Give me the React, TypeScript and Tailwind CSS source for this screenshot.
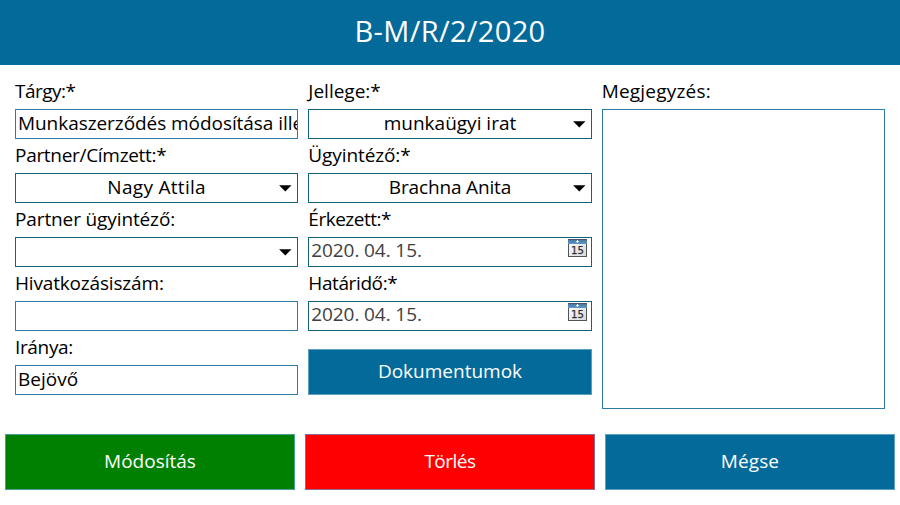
import type { ReactNode } from 'react';

const labelBase = 'flex h-[34px] items-center whitespace-nowrap text-[19px] leading-[26px] pb-[2px] text-black';

function Label({ children, className = '' }: { children: ReactNode; className?: string }) {
  return <div className={`${labelBase} ${className}`}><span>{children}</span></div>;
}

function TextBox({ value, className = '' }: { value?: string; className?: string }) {
  return (
    <div className="flex h-[30px] items-center overflow-hidden whitespace-nowrap border border-[#2f7ba3] bg-white pb-[3px] pl-[2px] text-[19px] leading-[26px] text-black">
      <span className={className}>{value}</span>
    </div>
  );
}

function Select({ value, className = '' }: { value?: string; className?: string }) {
  return (
    <div className="flex h-[30px] items-center whitespace-nowrap border border-[#17617f] bg-white pr-[5px] text-[19px] leading-[26px] text-black">
      <span className="flex-1 pb-[3px] pl-[18px] text-center"><span className={className}>{value}</span></span>
      <svg width="13" height="7" viewBox="0 0 13 7" className="mt-px" aria-hidden="true">
        <path d="M0.1 0.2H12.5L6.3 6.5Z" fill="#000" />
      </svg>
    </div>
  );
}

function CalendarIcon() {
  return (
    <svg width="20" height="19" viewBox="0 0 20 19" className="mt-px" aria-hidden="true">
      <defs>
        <linearGradient id="calendarPage" x1="0" y1="0" x2="1" y2="1">
          <stop offset="0" stopColor="#fff" />
          <stop offset="1" stopColor="#d5d8dd" />
        </linearGradient>
        <linearGradient id="calendarTop" x1="0" y1="0" x2="0" y2="1">
          <stop offset="0" stopColor="#426f99" />
          <stop offset="1" stopColor="#6498c3" />
        </linearGradient>
      </defs>
      <rect x="0.5" y="0.5" width="18" height="17" fill="url(#calendarPage)" stroke="#50545b" />
      <rect x="0" y="0" width="19" height="5" fill="url(#calendarTop)" />
      <path d="M0 0.5H19" stroke="#46596c" />
      <path d="M8 2.5H11M9.5 1V4" stroke="#fff" strokeOpacity="0.85" />
      <text x="9.6" y="15" textAnchor="middle" fontSize="10" fontFamily="DejaVu Sans" textLength="13" lengthAdjust="spacingAndGlyphs" fill="#303030" stroke="#303030" strokeWidth="0.25">15</text>
    </svg>
  );
}

function DateBox({ value }: { value: string }) {
  return (
    <div className="flex h-[30px] items-start justify-between whitespace-nowrap border border-[#17617f] bg-white pl-[2px] pr-[3px] text-[19px] leading-[26px] text-[#404040]">
      <span className="-mt-px tracking-[-0.1px]">{value}</span>
      <CalendarIcon />
    </div>
  );
}

export default function App() {
  return (
    <div className="flex h-[505px] w-[900px] flex-col overflow-hidden bg-white font-['Open_Sans','Noto_Sans',sans-serif]">
      <header className="flex h-[65px] items-center justify-center bg-[#046a9a] pb-[3px] text-[29px] leading-[38px] text-white">
        <h1 className="tracking-[0.35px]">B-M/R/2/2020</h1>
      </header>
      <main className="grid h-[359px] grid-cols-3 gap-[10px] px-[15px] pt-[10px]">
        <section>
          <Label className="tracking-[-0.5px]">Tárgy:*</Label>
          <TextBox value="Munkaszerződés módosítása illetve" className="tracking-[-0.06px]" />
          <Label className="tracking-[-0.3px]">Partner/Címzett:*</Label>
          <Select value="Nagy Attila" className="tracking-[0.3px]" />
          <Label className="tracking-[-0.12px]">Partner ügyintéző:</Label>
          <Select />
          <Label className="tracking-[-0.17px]">Hivatkozásiszám:</Label>
          <TextBox />
          <Label className="tracking-[-0.35px]">Iránya:</Label>
          <TextBox value="Bejövő" />
        </section>
        <section>
          <Label>Jellege:*</Label>
          <Select value="munkaügyi irat" />
          <Label className="tracking-[-0.1px]">Ügyintéző:*</Label>
          <Select value="Brachna Anita" className="tracking-[-0.15px]" />
          <Label className="tracking-[-0.5px]">Érkezett:*</Label>
          <DateBox value="2020. 04. 15." />
          <Label className="tracking-[-0.4px]">Határidő:*</Label>
          <DateBox value="2020. 04. 15." />
          <button className="mt-[18px] flex h-[46px] w-full items-center justify-center border border-[#5c9fc0] bg-[#046a9a] pb-[2px] text-[19px] leading-[26px] text-white">
            <span>Dokumentumok</span>
          </button>
        </section>
        <section>
          <Label className="tracking-[0.2px]">Megjegyzés:</Label>
          <div className="h-[300px] border border-[#2f7ba3] bg-white" />
        </section>
      </main>
      <footer className="mt-[10px] grid grid-cols-3 gap-[10px] px-[5px] text-[19px] leading-[26px] text-white">
        <button className="h-[56px] border border-[#4d9f9c] bg-[#008000] pb-[2px]"><span>Módosítás</span></button>
        <button className="h-[56px] border border-[#8c6d8c] bg-[#ff0000] pb-[2px]"><span className="tracking-[-0.5px]">Törlés</span></button>
        <button className="h-[56px] border border-[#5c9fc0] bg-[#046a9a] pb-[2px]"><span className="tracking-[0.1px]">Mégse</span></button>
      </footer>
    </div>
  );
}
